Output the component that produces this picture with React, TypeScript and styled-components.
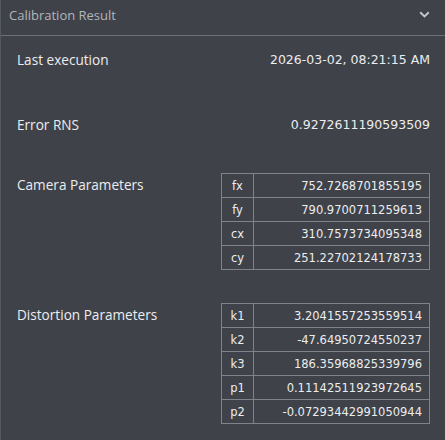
import styled, { createGlobalStyle } from "styled-components";

const GlobalStyle = createGlobalStyle`
  html, body {
    margin: 0;
    padding: 0;
    background: #3f4249;
  }
  body {
    font-family: "Open Sans", "DejaVu Sans", sans-serif;
  }
`;

const result = {
  lastExecution: "2026-03-02, 08:21:15 AM",
  errorRns: "0.9272611190593509",
  camera: [
    ["fx", "752.7268701855195"],
    ["fy", "790.9700711259613"],
    ["cx", "310.7573734095348"],
    ["cy", "251.22702124178733"],
  ],
  distortion: [
    ["k1", "3.2041557253559514"],
    ["k2", "-47.64950724550237"],
    ["k3", "186.35968825339796"],
    ["p1", "0.11142511923972645"],
    ["p2", "-0.07293442991050944"],
  ],
};

export default function App() {
  return (
    <>
      <GlobalStyle />
      <Panel>
        <Header>
          <Title>Calibration Result</Title>
          <svg width="11" height="7" viewBox="0 0 11 7">
            <path
              d="M1.2 1.2 L5.5 5.4 L9.8 1.2"
              fill="none"
              stroke="#c3c5c9"
              strokeWidth="2"
            />
          </svg>
        </Header>
        <Body>
          <Row $top={16}>
            <Label>Last execution</Label>
            <Value>{result.lastExecution}</Value>
          </Row>
          <Row $top={49}>
            <Label>Error RNS</Label>
            <Value>{result.errorRns}</Value>
          </Row>
          <Row $top={40}>
            <Label $pad>Camera Parameters</Label>
            <ParamTable rows={result.camera} />
          </Row>
          <Row $top={33}>
            <Label $pad>Distortion Parameters</Label>
            <ParamTable rows={result.distortion} />
          </Row>
        </Body>
      </Panel>
    </>
  );
}

function ParamTable({ rows }: { rows: string[][] }) {
  return (
    <Table>
      <tbody>
        {rows.map(([key, val]) => (
          <tr key={key}>
            <KeyCell>{key}</KeyCell>
            <ValCell>{val}</ValCell>
          </tr>
        ))}
      </tbody>
    </Table>
  );
}

const Panel = styled.div`
  width: 445px;
  height: 440px;
  box-sizing: border-box;
  border-left: 1px solid #55585e;
  background: #3f4249;
  color: #ecedef;
`;

const Header = styled.div`
  height: 36px;
  box-sizing: border-box;
  display: flex;
  align-items: center;
  justify-content: space-between;
  padding: 0 15px 6px 8px;
  border-bottom: 1px solid #6c6f74;
`;

const Title = styled.span`
  font-size: 13px;
  color: #b3b6bb;
`;

const Body = styled.div`
  display: flex;
  flex-direction: column;
  padding: 0 15px 0 16px;
`;

const Row = styled.div<{ $top: number }>`
  display: flex;
  justify-content: space-between;
  align-items: flex-start;
  margin-top: ${(p) => p.$top}px;
`;

const Label = styled.span<{ $pad?: boolean }>`
  font-size: 13.6px;
  line-height: 16px;
  padding-top: ${(p) => (p.$pad ? "4px" : "0")};
`;

const Value = styled.span`
  font-family: "DejaVu Sans", sans-serif;
  font-size: 12.5px;
  line-height: 16px;
`;

const Table = styled.table`
  width: 209px;
  border-collapse: collapse;
  font-family: "DejaVu Sans", sans-serif;
  font-size: 11.5px;
`;

const KeyCell = styled.td`
  width: 31px;
  height: 23px;
  padding: 0;
  text-align: center;
  border: 1px solid #808388;
`;

const ValCell = styled.td`
  height: 23px;
  padding: 0 7px 0 0;
  text-align: right;
  border: 1px solid #808388;
`;
